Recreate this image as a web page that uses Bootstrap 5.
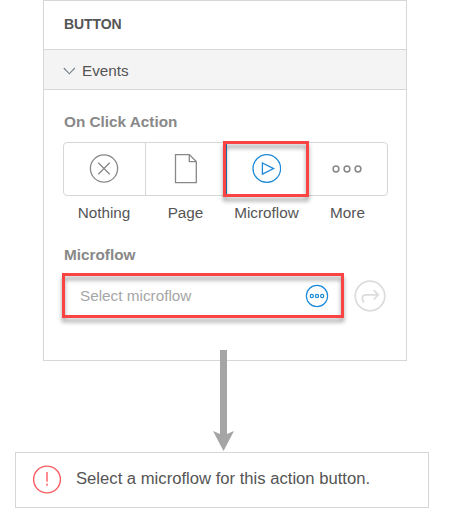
<!DOCTYPE html>
<html lang="en">
<head>
<meta charset="utf-8">
<meta name="viewport" content="width=device-width, initial-scale=1">
<title>Button events</title>
<link href="https://cdn.jsdelivr.net/npm/bootstrap@5.3.0/dist/css/bootstrap.min.css" rel="stylesheet">
<style>
body{font-family:"Liberation Sans",Arial,sans-serif;font-size:15.3px;line-height:20px;color:#555;background:#fff;overflow:hidden}
svg{display:block;fill:none;flex:none}
.panel{width:364px;height:361px;margin-left:43px;border:1px solid #d7d7d7}
.panel-title{height:49px;padding:0 0 2px 20px;font-size:14px;letter-spacing:-.1px;border-bottom:1px solid #d7d7d7}
.section-bar{height:40px;padding:2px 0 0 19px;background:#f4f4f4;border-bottom:1px solid #d7d7d7}
.section-name{margin-left:6px}
.field-label{color:#888;font-weight:700;padding-left:1px}
.panel-content{padding:22px 18px 0 19px}
.choices{height:54px;margin-top:10px;width:325px;border:1px solid #d7d7d7;border-radius:4px}
.choice{width:81px;border-right:1px solid #d7d7d7;color:#888}
.choice:first-child{width:82px}
.choice:last-child{border-right:0;width:80px}
.choice.chosen{border-left:1px solid #1c7fc4;margin-left:-1px;width:82px;color:#1c8ad6}
.framed{position:relative}
.framed::after{content:"";position:absolute;inset:-2px -3px -2px -4px;border:3px solid #fa4343;filter:drop-shadow(0 4px 2px rgba(0,0,0,.38));pointer-events:none}
.captions{width:325px;margin-top:7px}
.captions span{width:81px;text-align:center}
.captions span:nth-child(1){width:82px}
.lower-label{margin-top:22px}
.picker{width:276px;height:39px;padding:0 12px 0 15px;margin-left:2px;color:#a6a6a6}
.picker.framed::after{inset:-3px}
.picker-row{margin-top:11px}
.jump{margin-left:13px}
.link-arrow{position:absolute;left:213px;top:350px}
.notice{width:414px;height:56px;margin:91px 0 0 15px;padding:0 0 0 16px;border:1px solid #d7d7d7;font-size:16.65px}
.notice-text{margin:-3px 0 0 14px}
</style>
<script src="https://cdn.jsdelivr.net/npm/bootstrap@5.3.0/dist/js/bootstrap.bundle.min.js"></script>
</head>
<body>
<section class="panel">
  <div class="panel-title d-flex align-items-center fw-bold">BUTTON</div>
  <div class="section-bar d-flex align-items-center">
    <svg width="13" height="8" stroke="#73808c" stroke-width="1.1"><path d="M.8 1 6.3 6.8 11.8 1"/></svg>
    <span class="section-name">Events</span>
  </div>
  <div class="panel-content">
    <div class="field-label">On Click Action</div>
    <div class="choices d-flex">
      <div class="choice d-flex align-items-center justify-content-center"><svg width="30" height="30" stroke="currentColor" stroke-width="1.3"><circle cx="15" cy="14.5" r="13.6"/><path d="m9.3 8.8 11.4 11.4M20.7 8.8 9.3 20.2"/></svg></div>
      <div class="choice d-flex align-items-center justify-content-center"><svg width="24" height="30" stroke="currentColor" stroke-width="1.3"><path d="M1.5.6h13.8l7 7v21H1.5zM15.3.6v7h7"/></svg></div>
      <div class="choice chosen framed d-flex align-items-center justify-content-center"><svg width="30" height="30" stroke="currentColor" stroke-width="1.3"><circle cx="15.8" cy="14.5" r="13.8"/><path d="M11.4 9v11.2l11.2-5.6z"/></svg></div>
      <div class="choice d-flex align-items-center justify-content-center"><svg width="32" height="10" stroke="currentColor" stroke-width="1.5"><circle cx="5" cy="5" r="2.9"/><circle cx="16" cy="5" r="2.9"/><circle cx="27" cy="5" r="2.9"/></svg></div>
    </div>
    <div class="captions d-flex"><span>Nothing</span><span>Page</span><span>Microflow</span><span>More</span></div>
    <div class="field-label lower-label">Microflow</div>
    <div class="picker-row d-flex align-items-center">
      <div class="picker framed d-flex align-items-center justify-content-between">Select microflow
        <svg width="24" height="24" stroke="#1c8ad6" stroke-width="1.2"><circle cx="12" cy="12" r="10.6"/><circle cx="6.8" cy="12" r="1.6"/><circle cx="12" cy="12" r="1.6"/><circle cx="17.2" cy="12" r="1.6"/></svg>
      </div>
      <svg class="jump" width="32" height="32" stroke="#dcdcdc" stroke-width="1.7"><circle cx="16" cy="16" r="14.8"/><path d="M9.8 22.5C7 18.2 8.2 14.8 12 14.8h12M19.8 10.2l4.5 4.6-4.5 4.6"/></svg>
    </div>
  </div>
</section>
<svg class="link-arrow" width="22" height="102"><path fill="#a5a5a5" d="M7 0h7v84l7-3-10.5 20L0 81l7 3z"/></svg>
<section class="notice d-flex align-items-center">
  <svg width="30" height="30" stroke="#fa5c62" stroke-width="1.4"><circle cx="15" cy="14.5" r="13.4"/><path d="M15 7.1v9.6M15 18.5v2.2" /></svg>
  <div class="notice-text">Select a microflow for this action button.</div>
</section>
</body>
</html>
